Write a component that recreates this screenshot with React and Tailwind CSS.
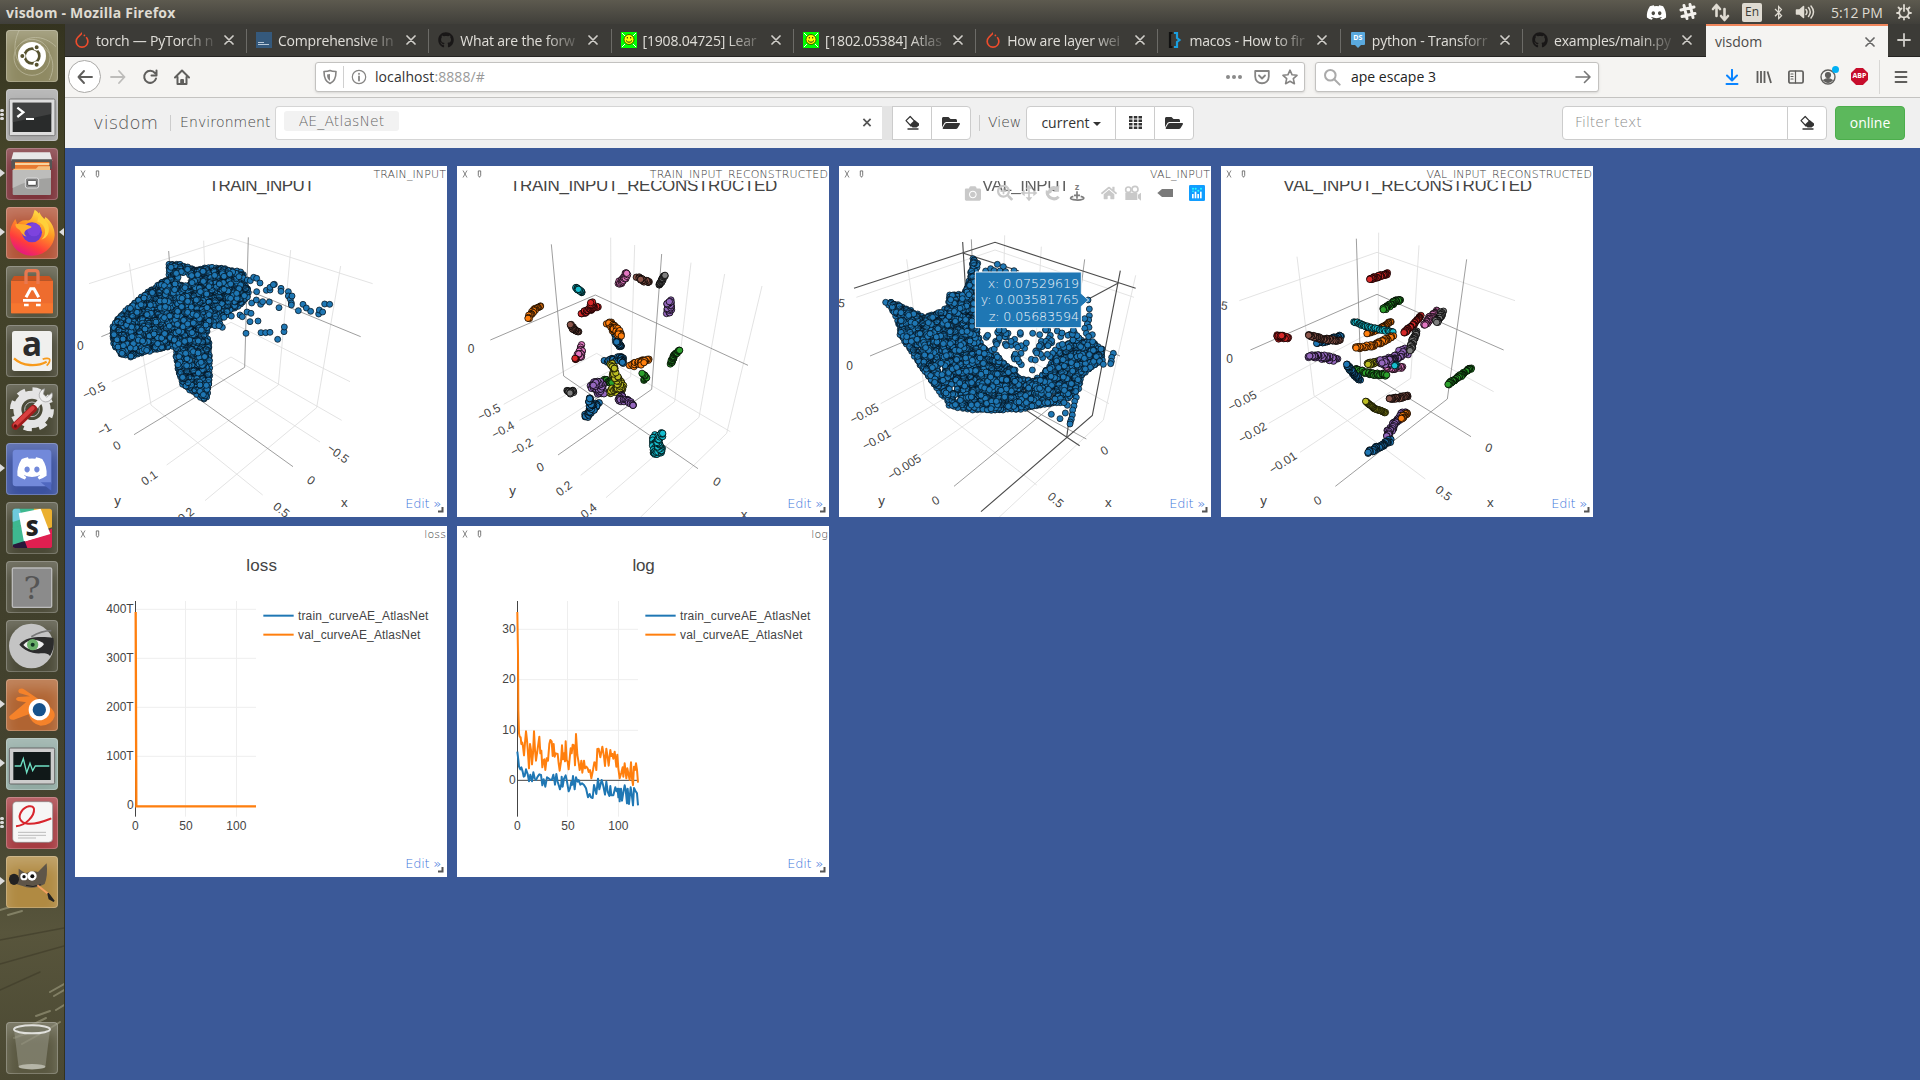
import React from "react";
import { FaDiscord, FaGithub, FaFolderOpen, FaBluetoothB, FaCamera, FaHome, FaSearchPlus } from "react-icons/fa";
import { SiPytorch } from "react-icons/si";

const UI = "font-['Open_Sans','Noto_Sans',sans-serif]";
const DJ = "font-['DejaVu_Sans',sans-serif]";
const SANS = "Liberation Sans, Arial, sans-serif";

const C = {
  blue: "#1f77b4", orange: "#ff7f0e", green: "#2ca02c", red: "#d62728", purple: "#9467bd",
  brown: "#8c564b", pink: "#e377c2", gray: "#7f7f7f", olive: "#bcbd22", cyan: "#17becf",
};

/* ---------- deterministic sampling ---------- */
function rng(seed) {
  let s = seed;
  return () => {
    s = (s * 1664525 + 1013904223) % 4294967296;
    return s / 4294967296;
  };
}
function inside(x, y, p) {
  let r = false;
  for (let i = 0, j = p.length - 1; i < p.length; j = i++) {
    const [a, b] = p[i], [c, d] = p[j];
    if (b > y !== d > y && x < ((c - a) * (y - b)) / (d - b) + a) r = !r;
  }
  return r;
}
function fill(poly, n, seed, holes = []) {
  const r = rng(seed);
  const xs = poly.map((p) => p[0]), ys = poly.map((p) => p[1]);
  const x0 = Math.min(...xs), x1 = Math.max(...xs), y0 = Math.min(...ys), y1 = Math.max(...ys);
  const out = [];
  while (out.length < n) {
    const x = x0 + r() * (x1 - x0), y = y0 + r() * (y1 - y0);
    if (inside(x, y, poly) && !holes.some(([a, b, q]) => Math.hypot(a - x, b - y) < q)) out.push([Math.round(x), Math.round(y)]);
  }
  return out;
}
function edge(poly, step, seed) {
  const r = rng(seed);
  const out = [];
  poly.forEach(([a, b], i) => {
    const [c, d] = poly[(i + 1) % poly.length];
    const n = Math.max(1, Math.round(Math.hypot(c - a, d - b) / step));
    for (let k = 0; k < n; k++) out.push([Math.round(a + ((c - a) * k) / n + r() * 4 - 2), Math.round(b + ((d - b) * k) / n + r() * 4 - 2)]);
  });
  return out;
}

function Dots({ pts, color = C.blue, sw = 2.2 }) {
  return (
    <g fill={color} stroke="#04101a" strokeWidth={sw}>
      {pts.map(([x, y], i) => <circle key={i} cx={x} cy={y} r="9" />)}
    </g>
  );
}
/* Outlines showing between the markers of a crowded cloud */
function Rings({ pts }) {
  return (
    <g fill="none" stroke="#04141f" strokeWidth="2" opacity=".75">
      {pts.map(([x, y], i) => <path key={i} d={`M${x - 8} ${y - 3}A9 9 0 0 1 ${x + 7} ${y - 5}`} />)}
    </g>
  );
}

function Strand({ c, pts, n = 14, j = 2, seed = 7 }) {
  const r = rng(seed + pts[0][0] * 31 + pts[0][1]);
  const seg = pts.length - 1;
  const m = Math.round(n * 1.7);
  const out = [];
  for (let i = 0; i < m; i++) {
    const t = (i / (m - 1)) * seg;
    const k = Math.min(seg - 1, Math.floor(t)), f = t - k;
    out.push([
      pts[k][0] + (pts[k + 1][0] - pts[k][0]) * f + (i === m - 1 ? 0 : (r() - 0.5) * 2.2 * j),
      pts[k][1] + (pts[k + 1][1] - pts[k][1]) * f + (i === m - 1 ? 0 : (r() - 0.5) * 2.2 * j),
    ]);
  }
  return (
    <g fill={C[c]} stroke="#000" strokeWidth="2.3">
      {out.map(([x, y], i) => <circle key={i} cx={x} cy={y} r="9.6" />)}
    </g>
  );
}

function Lines({ d, color = "#dedede", w = 2.6 }) {
  return <g stroke={color} strokeWidth={w} fill="none">{d.map((p, i) => <polyline key={i} points={p} />)}</g>;
}
function Tick({ x, y, r = 0, children, size = 36, fill = "#444" }) {
  return (
    <text x={x} y={y} transform={`rotate(${r} ${x} ${y})`} fontSize={size} fill={fill} textAnchor="middle" dominantBaseline="central" fontFamily={SANS}>
      {children}
    </text>
  );
}
function Title({ y = 77, len, op = 1, children }) {
  return <text x="575" y={y + 17} fontSize="51" fill="#444" opacity={op} textAnchor="middle" textLength={len} fontFamily={SANS}>{children}</text>;
}

/* ---------- charts (drawn in thirds of a pixel) ---------- */
const P1 = [[298, 312], [330, 314], [380, 330], [425, 322], [465, 327], [510, 337], [520, 345], [522, 372], [535, 388], [533, 410], [513, 433], [485, 448], [450, 478], [412, 500], [408, 525], [415, 550], [418, 600], [418, 660], [410, 712], [403, 718], [370, 695], [340, 674], [328, 640], [318, 590], [318, 556], [260, 568], [215, 578], [180, 590], [155, 582], [135, 560], [128, 530], [130, 500], [150, 470], [185, 437], [225, 404], [275, 368], [298, 355]];
const P1X = [[532, 360], [541, 362], [551, 352], [560, 355], [570, 369], [560, 395], [589, 391], [600, 390], [600, 382], [613, 373], [610, 374], [633, 385], [633, 394], [655, 395], [655, 408], [661, 418], [666, 408], [664, 429], [664, 435], [685, 452], [699, 433], [709, 444], [722, 454], [746, 462], [748, 450], [758, 456], [764, 432], [779, 433], [627, 443], [545, 429], [559, 420], [572, 433], [578, 425], [598, 426], [510, 465], [517, 470], [531, 456], [543, 460], [540, 485], [564, 483], [528, 520], [573, 518], [587, 518], [600, 517], [642, 515], [643, 501], [623, 538], [484, 468], [457, 502], [450, 492], [462, 472], [435, 497], [447, 497]];
const H1 = [[344, 358, 19], [372, 596, 6]];

function TrainInput() {
  return (
    <>
      <Title len="318">TRAIN_INPUT</Title>
      <Lines d={["57,371 483,235 908,371", "178,310 200,470 243,735", "401,242 410,480", "662,270 625,675", "812,318 740,743", "125,665 483,487 840,665", "150,780 483,591 815,781", "243,735 578,1005", "290,915 625,675", "405,1022 740,743", "430,640 750,846"]} />
      <Lines color="#8f8f8f" d={["94,530 483,370 872,530", "296,273 310,470 335,680 669,920", "535,232 524,622 192,824"]} />
      <Dots pts={edge(P1, 12, 5)} />
      <Dots pts={fill(P1, 1900, 11, H1)} />
      <Rings pts={fill(P1, 1100, 41, H1)} />
      <Dots pts={fill(P1, 210, 91, H1)} />
      <Dots pts={P1X} />
      <Tick x="31" y="558">0</Tick><Tick x="72" y="692" r={-27}>−0.5</Tick><Tick x="103" y="808" r={-30}>−1</Tick>
      <Tick x="141" y="857" r={-30}>0</Tick><Tick x="238" y="954" r={-35}>0.1</Tick><Tick x="348" y="1065" r={-38}>0.2</Tick>
      <Tick x="804" y="881" r={37}>−0.5</Tick><Tick x="723" y="961" r={35}>0</Tick><Tick x="634" y="1050" r={38}>0.5</Tick>
      <Tick x="143" y="1022" size={40}>y</Tick><Tick x="823" y="1026" size={40}>x</Tick>
    </>
  );
}

function TrainRecon() {
  return (
    <>
      <Title len="802">TRAIN_INPUT_RECONSTRUCTED</Title>
      <Lines d={["476,233 478,610", "548,255 536,650", "717,308 668,725", "818,342 741,772", "930,378 824,820", "155,733 434,580 835,815", "202,781 478,630", "256,831 536,650", "386,946 668,725", "462,1013 741,772", "565,1072 824,820"]} />
      <Lines color="#8f8f8f" d={["115,540 430,405 888,616", "298,253 335,648 738,926", "629,282 599,688 318,885"]} />
      <Strand c="cyan" pts={[[391, 398], [385, 393], [372, 382], [379, 388]]} n={9} />
      <Strand c="pink" pts={[[500, 371], [515, 360], [524, 340]]} n={15} j={5} />
      <Strand c="brown" pts={[[556, 353], [590, 368], [566, 358]]} n={16} j={3} />
      <Strand c="gray" pts={[[621, 376], [630, 360], [639, 346]]} n={14} />
      <Strand c="purple" pts={[[650, 458], [652, 440], [652, 425]]} n={16} j={7} />
      <Strand c="orange" pts={[[265, 441], [245, 450], [228, 475]]} n={13} j={3} />
      <Strand c="red" pts={[[437, 440], [388, 459], [425, 442], [416, 428]]} n={26} j={4} />
      <Strand c="brown" pts={[[378, 515], [365, 507], [355, 494]]} n={11} />
      <Strand c="pink" pts={[[390, 556], [385, 590], [380, 582]]} n={13} j={5} />
      <Strand c="red" pts={[[372, 598], [369, 595]]} n={3} j={1} />
      <Strand c="blue" pts={[[490, 520], [505, 562], [494, 546]]} n={18} j={4} />
      <Strand c="orange" pts={[[470, 488], [490, 510], [480, 500], [508, 528]]} n={28} j={7} />
      <Strand c="blue" pts={[[462, 607], [510, 590], [511, 607]]} n={20} j={5} />
      <Strand c="orange" pts={[[590, 594], [537, 615], [576, 608]]} n={22} j={6} />
      <Strand c="green" pts={[[656, 610], [665, 588], [683, 571]]} n={18} j={3} />
      <Strand c="green" pts={[[576, 661], [582, 652], [570, 640]]} n={5} j={2} />
      <Strand c="green" pts={[[460, 660], [480, 668]]} n={8} j={3} />
      <Strand c="olive" pts={[[478, 612], [488, 650], [515, 685], [470, 698], [500, 680], [487, 625]]} n={50} j={6} />
      <Strand c="purple" pts={[[418, 675], [450, 700], [445, 668], [424, 676]]} n={38} j={8} />
      <Strand c="purple" pts={[[510, 705], [500, 722], [528, 720], [543, 736]]} n={18} j={4} />
      <Strand c="gray" pts={[[344, 694], [364, 694], [354, 699]]} n={10} j={3} />
      <Strand c="blue" pts={[[438, 728], [400, 768], [420, 745], [413, 716]]} n={34} j={6} />
      <Strand c="cyan" pts={[[605, 828], [604, 880], [630, 870], [615, 845], [632, 820]]} n={40} j={5} />
      <Tick x="57" y="566">0</Tick><Tick x="111" y="757" r={-27}>−0.5</Tick><Tick x="153" y="810" r={-29}>−0.4</Tick>
      <Tick x="209" y="861" r={-30}>−0.2</Tick><Tick x="265" y="922" r={-25}>0</Tick><Tick x="336" y="986" r={-37}>0.2</Tick>
      <Tick x="410" y="1053" r={-39}>0.4</Tick><Tick x="795" y="965" r={30}>0</Tick>
      <Tick x="182" y="992" size={40}>y</Tick><Tick x="876" y="1062" size={40}>x</Tick>
    </>
  );
}

const P3 = [[418, 298], [432, 308], [424, 335], [424, 400], [426, 480], [430, 520], [445, 560], [470, 585], [500, 602], [530, 625], [555, 655], [598, 662], [625, 645], [645, 620], [665, 590], [700, 550], [730, 540], [770, 545], [803, 565], [803, 600], [765, 628], [742, 645], [736, 685], [712, 705], [680, 728], [620, 734], [560, 748], [470, 750], [400, 748], [345, 735], [340, 712], [322, 702], [300, 672], [275, 638], [250, 600], [225, 562], [200, 522], [193, 480], [178, 452], [157, 427], [170, 427], [205, 440], [240, 460], [272, 472], [318, 456], [345, 440], [348, 403], [388, 404], [400, 385], [410, 350]];
const P3S = [[442, 508], [720, 508], [765, 540], [700, 550], [665, 590], [600, 600], [540, 640], [500, 602], [455, 570]];
const H3 = [[322, 625, 12], [357, 684, 12], [370, 714, 11]];

function ValInput() {
  return (
    <>
      <Title len="262" op={0.85}>VAL_INPUT</Title>
      <Lines d={["67,412 483,270 900,412", "218,298 275,716 608,975", "512,226 505,560", "622,260 600,650", "905,346 808,780 495,1072", "140,731 483,545 825,731", "175,808 475,630", "262,886 600,650"]} />
      <Lines color="#8f8f8f" d={["108,588 483,430 858,588", "412,238 430,660 757,837", "752,298 700,700 360,979"]} />
      <Lines color="#4d4d4d" w={3.4} d={["60,385 483,247 905,385", "386,246 410,640 737,857", "859,332 775,766 441,1055", "386,279 555,333", "740,430 853,369", "698,832 710,745"]} />
      <Dots pts={edge(P3, 13, 8)} />
      <Dots pts={fill(P3, 2000, 23, H3)} />
      <Rings pts={fill(P3, 1100, 47, H3)} />
      <Dots pts={fill(P3, 260, 77, [[322, 625, 14], [362, 700, 18]])} />
      <Dots pts={fill(P3S, 85, 31, [[590, 630, 30], [500, 565, 16], [600, 548, 14], [470, 540, 14]])} />
      <Dots pts={[[455, 333], [470, 326], [490, 313], [508, 320], [540, 332], [480, 332], [498, 333], [515, 335], [766, 447], [766, 467], [764, 480], [752, 476], [760, 492], [765, 502], [752, 505], [757, 520], [775, 524], [764, 530], [776, 545], [838, 580], [833, 592], [832, 604], [830, 611], [808, 613], [652, 763], [678, 776], [694, 759], [700, 736], [690, 728], [727, 712], [722, 724], [720, 738], [716, 750], [715, 765], [712, 778], [709, 786], [708, 792], [595, 630], [604, 600], [550, 597], [640, 583], [762, 420]]} />
      <g>
        <path d="M424 336 H742 V401 L764 420 L742 439 V503 H424 Z" fill={C.blue} stroke="#f4f8fb" strokeWidth="3" />
        <g fill="#f2f6fa" fontFamily="DejaVu Sans, sans-serif" fontWeight="200" fontSize="38" textAnchor="end">
          <text x="735" y="384" textLength="274">x: 0.07529619</text>
          <text x="735" y="432" textLength="295">y: 0.003581765</text>
          <text x="735" y="483" textLength="271">z: 0.05683594</text>
        </g>
      </g>
      <g color="#c9c9c9" fill="#c9c9c9">
        <FaCamera x="392" y="76" size="49" />
        <FaSearchPlus x="489" y="74" size="48" />
        <path d="M585 80V118M566 99H604" stroke="#c9c9c9" strokeWidth="5" />
        <path d="M585 74l10 12h-20zM585 124l10-12h-20zM560 99l12-10v20zM610 99l-12-10v20z" />
        <path d="M640 92A20 20 0 0 0 674 110" fill="none" stroke="#c9c9c9" strokeWidth="9" />
        <path d="M646 84A20 20 0 0 1 668 80l8-5-1 20-18 1 6-7A12 12 0 0 0 652 98l-16 8z" />
        <FaHome x="801" y="75" size="48" />
        <path d="M874 98h36v22h-36zM912 104l9-6v24l-9-7z" />
        <g fill="none" stroke="#c9c9c9" strokeWidth="5"><circle cx="883" cy="89" r="8" /><circle cx="903" cy="88" r="9" /></g>
      </g>
      <g fill="none" stroke="#7d7d7d" strokeWidth="5"><path d="M729 94v22M720 106h18" /><path d="M718 109c-10 3-12 8 0 10 10 2 20 2 28-1 6-3 4-7-6-9" /></g>
      <text x="729" y="91" fontSize="28" fontWeight="700" fill="#7d7d7d" textAnchor="middle" fontFamily={SANS}>z</text>
      <path d="M970 99l14-12h33v24h-33z" fill="#7a7a7a" />
      <rect x="1065" y="75" width="48" height="48" rx="4" fill="#119dff" />
      <g fill="#fff"><rect x="1074" y="102" width="5" height="13" /><rect x="1082" y="95" width="5" height="20" /><rect x="1090" y="102" width="5" height="13" /><rect x="1098" y="95" width="5" height="20" /></g>
      <g fill="#25fefd"><circle cx="1077" cy="86" r="3" /><circle cx="1085" cy="86" r="3" /><circle cx="1093" cy="92" r="3" /><circle cx="1101" cy="86" r="3" /><circle cx="1077" cy="94" r="2.5" /></g>
      <Tick x="23" y="430" r={8}>5</Tick><Tick x="47" y="617">0</Tick><Tick x="91" y="761" r={-28}>−0.05</Tick><Tick x="128" y="839" r={-29}>−0.01</Tick>
      <Tick x="211" y="921" r={-33}>−0.005</Tick><Tick x="305" y="1022" r={-30}>0</Tick><Tick x="811" y="872" r={-30}>0</Tick><Tick x="665" y="1020" r={40}>0.5</Tick>
      <Tick x="143" y="1022" size={40}>y</Tick><Tick x="823" y="1026" size={40}>x</Tick>
    </>
  );
}

function ValRecon() {
  return (
    <>
      <Title len="746">VAL_INPUT_RECONSTRUCTED</Title>
      <Lines d={["70,422 483,277 897,422", "243,290 294,707 628,957", "488,218 486,560", "609,256 584,655", "132,695 483,507 833,695", "158,790 486,600", "252,877 584,655"]} />
      <Lines color="#8f8f8f" d={["103,570 483,403 863,570", "421,236 434,625 765,830", "752,298 694,717 358,979"]} />
      <Strand c="red" pts={[[514, 341], [488, 349], [461, 358]]} n={22} j={3} />
      <Strand c="green" pts={[[549, 419], [530, 430], [502, 449]]} n={24} j={4} />
      <Strand c="red" pts={[[182, 533], [215, 532], [184, 528], [197, 527]]} n={20} j={4} />
      <Strand c="blue" pts={[[372, 527], [340, 540], [302, 550]]} n={26} j={4} />
      <Strand c="brown" pts={[[370, 541], [320, 537], [278, 526]]} n={26} j={3} />
      <Strand c="purple" pts={[[361, 599], [320, 592], [281, 588]]} n={36} j={6} />
      <Strand c="orange" pts={[[524, 486], [490, 507], [453, 521]]} n={20} j={2} />
      <Strand c="cyan" pts={[[414, 484], [460, 502], [531, 516]]} n={20} j={2} />
      <Strand c="orange" pts={[[530, 530], [480, 555], [420, 564]]} n={28} j={4} />
      <Strand c="red" pts={[[613, 469], [590, 495], [564, 518]]} n={24} j={3} />
      <Strand c="pink" pts={[[663, 453], [640, 475], [627, 495]]} n={26} j={4} />
      <Strand c="gray" pts={[[679, 457], [668, 475], [662, 487]]} n={22} j={4} />
      <Strand c="green" pts={[[420, 630], [460, 640], [512, 645]]} n={28} j={4} />
      <Strand c="olive" pts={[[490, 605], [470, 608], [456, 613]]} n={18} j={4} />
      <Strand c="pink" pts={[[560, 620], [535, 625], [511, 621]]} n={20} j={4} />
      <Strand c="purple" pts={[[578, 570], [540, 590], [520, 605], [498, 609]]} n={48} j={9} />
      <Strand c="cyan" pts={[[540, 615], [536, 617]]} n={2} j={1} />
      <Strand c="gray" pts={[[601, 514], [592, 540], [582, 572]]} n={24} j={4} />
      <Strand c="blue" pts={[[432, 660], [412, 640], [392, 613]]} n={22} j={3} />
      <Strand c="green" pts={[[765, 624], [730, 650], [696, 673]]} n={28} j={3} />
      <Strand c="brown" pts={[[576, 708], [550, 713], [520, 716]]} n={20} j={3} />
      <Strand c="olive" pts={[[508, 758], [475, 745], [449, 724]]} n={22} j={1} />
      <Strand c="purple" pts={[[568, 758], [535, 790], [512, 828]]} n={38} j={6} />
      <Strand c="orange" pts={[[574, 758], [556, 775]]} n={10} j={3} />
      <Strand c="blue" pts={[[522, 842], [490, 860], [456, 877]]} n={28} j={4} />
      <Tick x="25" y="437" r={8}>5</Tick><Tick x="41" y="598">0</Tick><Tick x="79" y="723" r={-28}>−0.05</Tick><Tick x="110" y="818" r={-30}>−0.02</Tick>
      <Tick x="201" y="908" r={-33}>−0.01</Tick><Tick x="305" y="1022" r={-30}>0</Tick><Tick x="818" y="864" r={20}>0</Tick><Tick x="683" y="1000" r={38}>0.5</Tick>
      <Tick x="143" y="1022" size={40}>y</Tick><Tick x="823" y="1026" size={40}>x</Tick>
    </>
  );
}

function Axes({ ys, title, len, zero }) {
  return (
    <>
      <Title y={136} len={len}>{title}</Title>
      <g stroke="#eee" strokeWidth="3">
        {ys.map(([y]) => <path key={y} d={`M196 ${y}H558`} />)}
        <path d="M346.500 243V890M499.500 243V890" />
      </g>
      <path d="M196.500 243V890" stroke="#444" strokeWidth="3" />
      {zero && <path d={`M196 ${zero}H558`} stroke="#444" strokeWidth="3" />}
      <g fontSize="36" fill="#444" fontFamily={SANS}>
        {ys.map(([y, l]) => <text key={l} x="191" y={y + 11} textAnchor="end">{l}</text>)}
        {zero && <text x="191" y={zero + 11} textAnchor="end">0</text>}
        <text x="196" y="930" textAnchor="middle">0</text><text x="348" y="930" textAnchor="middle">50</text><text x="499" y="930" textAnchor="middle">100</text>
        <text x="684" y="300" textLength="391">train_curveAE_AtlasNet</text><text x="684" y="357" textLength="367">val_curveAE_AtlasNet</text>
      </g>
      <path d="M580 287H671" stroke={C.blue} strokeWidth="6" /><path d="M580 344H671" stroke={C.orange} strokeWidth="6" />
    </>
  );
}
function Loss() {
  return (
    <>
      <Axes title="loss" len="92" ys={[[268, "400T"], [415, "300T"], [562, "200T"], [709, "100T"], [857, "0"]]} />
      <path d="M197 276L199 859H558" fill="none" stroke={C.orange} strokeWidth="7" />
    </>
  );
}
const VAL = "196,276 198,400 199,570 201,640 203,650 206,652 208,672 211,668 213,680 216,706 219,668 222,634 225,660 228,700 231,745 234,672 237,690 240,733 243,700 246,634 249,690 252,722 255,700 259,672 262,650 265,700 268,692 271,742 274,722 277,718 280,750 284,715 288,722 292,672 295,660 299,664 302,708 305,672 308,710 311,700 317,702 320,730 323,752 327,725 330,676 333,718 336,700 339,724 341,664 344,720 347,725 350,748 353,715 356,685 359,700 362,674 366,676 369,736 372,642 376,705 380,728 383,750 386,738 388,722 391,758 396,722 399,745 403,740 407,745 410,756 414,750 418,775 423,750 427,727 430,728 433,750 436,687 440,686 445,712 451,680 456,710 459,738 463,686 467,712 470,737 475,690 478,708 481,702 484,716 488,695 493,740 496,704 499,745 503,775 508,758 512,742 514,770 518,730 523,775 526,745 530,765 533,780 537,727 540,775 543,795 546,740 549,750 552,730 555,750 558,788";
const TRAIN = "196,695 199,720 201,740 205,748 208,742 212,755 215,770 218,768 222,748 227,762 231,784 235,764 240,784 244,757 248,775 252,780 257,770 262,763 267,765 271,796 275,778 280,800 285,772 290,775 295,780 300,778 304,764 307,780 309,794 313,762 317,785 320,795 324,808 328,792 329,770 332,800 336,776 341,766 345,785 350,814 354,805 358,785 360,795 363,768 368,808 372,772 377,785 380,780 385,794 390,790 396,795 402,805 408,832 413,822 417,832 422,834 426,795 433,822 438,776 442,808 449,780 453,794 459,824 463,785 467,815 472,828 475,798 478,826 484,826 490,802 494,814 497,806 499,832 501,806 503,844 507,806 510,842 515,812 518,796 521,810 525,850 527,806 531,852 536,802 540,830 543,856 546,804 550,812 555,820 558,856";
function Log() {
  return (
    <>
      <Axes title="log" len="67" zero={781} ys={[[328, "30"], [479, "20"], [631, "10"]]} />
      <g fill="none" strokeWidth="6" strokeLinejoin="round"><polyline points={TRAIN} stroke={C.blue} /><polyline points={VAL} stroke={C.orange} /></g>
    </>
  );
}

function Pane({ name, Chart }) {
  return (
    <section className="relative h-[351px] w-[372px] overflow-hidden bg-white">
      <svg className="absolute inset-0 h-full w-full" viewBox="15 18 1116 1053"><Chart /></svg>
      <header className={`relative flex h-[15px] items-center justify-between bg-white pl-[5px] pr-[1px] text-[11px] leading-[15px] font-extralight text-[#3c3c3c] ${DJ}`}>
        <span className="flex items-center gap-[9px]">
          <svg width="6" height="8" viewBox="0 0 6 8" fill="none" stroke="#666" strokeWidth=".8"><path d="M1 .5L5 7.500M5 .5L1 7.500" /></svg>
          <svg width="5" height="8" viewBox="0 0 5 8" fill="none" stroke="#555" strokeWidth=".8"><path d="M1.300 .9h2.400v4.600L2.500 7.300 1.300 5.500z" /></svg>
        </span>
        <span className="translate-y-px tracking-[0.12px]">{name}</span>
      </header>
      <div className={`absolute right-[6px] bottom-[4px] text-[13px] leading-[18px] font-extralight tracking-[-0.25px] text-[#3f78dc] ${DJ}`}>Edit »</div>
      <svg className="absolute right-[3px] bottom-[4px]" width="6" height="6"><path d="M4.500 0V4.500H0" stroke="#555" strokeWidth="2" fill="none" /></svg>
    </section>
  );
}

/* ---------- launcher ---------- */
const Tile = ({ bg, mark, focus, children }) => (
  <div className="relative flex h-[52px] w-[65px] shrink-0 items-center pl-[6px]">
    {mark === 1 && <i className="absolute top-[21px] left-0 h-0 w-0 border-y-[4px] border-l-[5px] border-y-transparent border-l-[#dcdcdc]" />}
    {mark === 3 && <i className="absolute top-[20px] left-0 flex h-[11px] w-[4px] flex-col justify-between"><b className="h-[3px] rounded bg-[#dcdcdc]" /><b className="h-[3px] rounded bg-[#dcdcdc]" /><b className="h-[3px] rounded bg-[#dcdcdc]" /></i>}
    <div className={`relative h-[52px] w-[52px] overflow-hidden rounded-[4px] shadow-[inset_0_0_0_1px_rgba(255,255,255,0.22),inset_0_10px_14px_rgba(255,255,255,0.22)] ${bg}`}>
      <svg width="52" height="52" viewBox="0 0 156 156">{children}</svg>
    </div>
    {focus && <i className="absolute top-[21px] right-[1px] h-0 w-0 border-y-[4px] border-r-[5px] border-y-transparent border-r-[#dcdcdc]" />}
  </div>
);

function Launcher() {
  return (
    <aside className="relative flex w-[65px] shrink-0 flex-col gap-[7px] border-r border-[#33321f] bg-[linear-gradient(180deg,#34331f_0%,#454429_12%,#403f2b_50%,#454430_75%,#58553c_86%,#4a4832_100%)] pt-[6px] pb-[6px]">
      <svg className="absolute bottom-0 left-0" width="64" height="200" viewBox="0 0 64 200" fill="none" strokeLinecap="round">
        <g stroke="#a8a588" strokeWidth="2" opacity=".55"><path d="M0 30L20 24M8 35L22 31M50 112L64 104M54 116L64 110M36 136L50 131M30 146L46 138M14 158L30 152M22 164L40 154M44 152L60 142M56 130L64 125" /></g>
        <g stroke="#3d3b28" strokeWidth="1.500" opacity=".6"><path d="M0 60L64 48M0 84L64 66M0 110L40 92" /></g>
      </svg>
      <Tile bg="bg-[#8f8a63]">
        <g fill="none" stroke="#cbc8b0" strokeWidth="3" opacity=".6"><circle cx="78" cy="82" r="54" /><path d="M40 0C20 40 20 90 60 120M150 50C110 10 60 20 45 40M130 150C150 110 140 70 110 50" /></g>
        <circle cx="78" cy="78" r="42" fill="#fff" />
        <circle cx="78" cy="78" r="22" fill="none" stroke="#56522f" strokeWidth="8" />
        <g stroke="#fff" strokeWidth="4" fill="#56522f"><circle cx="49" cy="78" r="8" /><circle cx="92" cy="52" r="8" /><circle cx="92" cy="104" r="8" /></g>
      </Tile>
      <Tile bg="bg-[#a8a8a8]" mark={3}>
        <rect x="10" y="30" width="137" height="110" rx="4" fill="#ddd" stroke="#777" strokeWidth="3" /><rect x="20" y="41" width="116" height="88" fill="#292b2b" /><path d="M20 41H136V75L20 100Z" fill="#555" opacity=".5" />
        <path d="M34 56l18 14-18 14" fill="none" stroke="#fff" strokeWidth="7" /><path d="M60 90h24" stroke="#fff" strokeWidth="6" />
      </Tile>
      <Tile bg="bg-[#7d343b]" mark={1}>
        <path d="M22 13H132L139 38H15Z" fill="#e8e8e8" /><path d="M16 34H138V62H16Z" fill="#555" /><path d="M27 42H130V64H27Z" fill="#e87a30" /><path d="M27 48H130" stroke="#fff0c0" strokeWidth="4" /><path d="M22 62H90L97 55H132V66H22Z" fill="#f4c080" />
        <path d="M20 66H135V138Q135 141 132 141H23Q20 141 20 138Z" fill="#a2a2a0" /><path d="M20 66H135V90Q80 90 20 120Z" fill="#bdbdbb" />
        <rect x="58" y="90" width="40" height="30" rx="6" fill="#888" stroke="#ddd" strokeWidth="3" /><rect x="65" y="97" width="26" height="15" rx="3" fill="#fff" stroke="#333" strokeWidth="2.500" />
      </Tile>
      <Tile bg="bg-[#b35539]" mark={1} focus>
        <defs><linearGradient id="ff" x1=".8" y1="0" x2=".3" y2="1"><stop offset="0" stopColor="#fff34f" /><stop offset=".4" stopColor="#ff9a24" /><stop offset=".75" stopColor="#ff3c3c" /><stop offset="1" stopColor="#e31587" /></linearGradient></defs>
        <path d="M78 146C35 146 10 112 12 76C14 58 20 48 28 36L34 52C40 44 50 38 62 40C76 42 80 28 86 8C96 14 104 24 108 36C114 40 116 36 118 30C138 44 146 66 146 84C144 118 116 146 78 146Z" fill="url(#ff)" />
        <circle cx="78" cy="76" r="30" fill="#6a3bd0" /><circle cx="84" cy="68" r="20" fill="#8a4ae8" opacity=".6" />
        <path d="M28 52C44 50 62 52 74 58C80 60 74 64 62 68C52 74 54 84 62 88C50 88 46 74 40 68C34 66 28 60 28 52Z" fill="#ffb02e" />
        <path d="M94 44C118 50 126 80 106 98C124 94 134 74 126 52C118 36 104 28 100 14Z" fill="#ffd03a" />
      </Tile>
      <Tile bg="bg-[#55543f]">
        <path d="M15 44H141V138Q141 142 137 142H19Q15 142 15 138Z" fill="#ee6c2e" /><path d="M15 44L24 30H130L141 44Z" fill="#c9521f" /><path d="M15 112H141V142H15Z" fill="#f6762f" />
        <path d="M60 54V22Q60 14 68 14H88Q96 14 96 22V54" fill="none" stroke="#e87850" strokeWidth="10" />
        <path d="M60 94L74 68H84L98 94" fill="none" stroke="#fff" strokeWidth="9" /><path d="M51 103H105M54 117H68M90 117H104" stroke="#fff" strokeWidth="8" />
      </Tile>
      <Tile bg="bg-[#4b4a38]">
        <rect x="18" y="18" width="120" height="120" rx="8" fill="#f0f0ee" /><text x="78" y="94" textAnchor="middle" fontSize="100" fontWeight="700" fontFamily="Open Sans, sans-serif" fill="#2b2b2b">a</text>
        <path d="M24 100C50 124 92 126 122 110" fill="none" stroke="#f79a1b" strokeWidth="7" /><path d="M110 103C120 98 130 100 131 103C132 108 128 116 122 122" fill="none" stroke="#f79a1b" strokeWidth="5" />
      </Tile>
      <Tile bg="bg-[#4a4936]">
        <circle cx="78" cy="76" r="44" fill="none" stroke="#e4e4e4" strokeWidth="24" /><circle cx="78" cy="76" r="58" fill="none" stroke="#e4e4e4" strokeWidth="16" strokeDasharray="24 21.500" /><circle cx="78" cy="76" r="22" fill="none" stroke="#bbb" strokeWidth="3" />
        <path d="M84 72L110 44" stroke="#eee" strokeWidth="16" /><path d="M138 26A20 20 0 1 1 116 14L112 30L122 40Z" fill="#eee" stroke="#999" strokeWidth="2" />
        <path d="M28 126L82 74" stroke="#a01c1c" strokeWidth="22" strokeLinecap="round" /><path d="M27 123L80 72" stroke="#d84040" strokeWidth="12" strokeLinecap="round" /><circle cx="28" cy="126" r="5" fill="#641010" />
      </Tile>
      <Tile bg="bg-[#3c529f]" mark={1}>
        <rect x="20" y="20" width="116" height="110" rx="10" fill="#7289da" /><path d="M104 118H136V143Z" fill="#5068c0" /><g color="#fff"><FaDiscord x="30" y="28" size="96" /></g>
      </Tile>
      <Tile bg="bg-[#4a4936]">
        <clipPath id="sl"><rect x="20" y="20" width="118" height="118" rx="8" /></clipPath>
        <g clipPath="url(#sl)"><path d="M0 0H80L95 50L20 80L0 90Z" fill="#3eb890" /><path d="M80 0H156V70L95 90Z" fill="#ebb030" /><path d="M156 70V156H90L80 110Z" fill="#df1f50" /><path d="M0 20L40 18L50 50L20 60Z" fill="#6ecadc" /><path d="M0 84L44 70L60 120L0 140Z" fill="#3eb890" /><path d="M38 34L104 20L134 98L54 120Z" fill="#fff" /><path d="M20 130L140 94V138H20Z" fill="#df1f50" /><path d="M20 128L56 117L64 138H20Z" fill="#29173a" /></g>
        <text x="78" y="101" fontSize="66" fontWeight="800" textAnchor="middle" fontFamily="Open Sans, sans-serif" fill="#222">S</text>
      </Tile>
      <Tile bg="bg-[#4f4e3c]">
        <rect x="19" y="21" width="118" height="118" rx="4" fill="#8b8b8b" stroke="#bbb" strokeWidth="4" /><text x="78" y="114" fontSize="96" textAnchor="middle" fontFamily="DejaVu Serif, serif" fill="#555">?</text>
      </Tile>
      <Tile bg="bg-[#4c4b39]">
        <circle cx="76" cy="78" r="67" fill="#c4c4c4" /><path d="M40 74C60 46 116 50 142 54C146 74 142 92 132 108C122 94 100 104 80 98C64 94 50 86 40 74Z" fill="#2c2c2c" /><path d="M52 75C66 56 98 56 114 72C104 92 68 95 52 75Z" fill="#eee" /><circle cx="80" cy="74" r="17" fill="#6ab06a" /><circle cx="80" cy="74" r="6" fill="#132" /><path d="M76 50C100 36 120 32 136 32" stroke="#777" strokeWidth="5" fill="none" />
      </Tile>
      <Tile bg="bg-[#b06432]" mark={1}>
        <path d="M40 30Q48 26 56 32L132 84Q148 98 146 112Q138 140 104 140Q76 136 68 106L24 122Q8 124 10 112L60 70L36 66Q24 60 36 54L72 52L40 42Q34 36 40 30Z" fill="#f5822a" /><circle cx="100" cy="92" r="32" fill="#fff" /><circle cx="100" cy="92" r="20" fill="#16528c" />
      </Tile>
      <Tile bg="bg-[#91aaa3]" mark={1}>
        <rect x="10" y="30" width="136" height="108" rx="4" fill="#ccc" stroke="#666" strokeWidth="3" /><rect x="22" y="42" width="112" height="84" fill="#101818" /><path d="M26 84H44L52 62L62 104L72 76L80 98L88 84H130" fill="none" stroke="#6fe0c4" strokeWidth="4" />
      </Tile>
      <Tile bg="bg-[#a63c42]" mark={3}>
        <rect x="20" y="14" width="120" height="122" rx="12" fill="#f6f6f6" stroke="#888" strokeWidth="2" /><path d="M30 88C60 86 86 56 84 36C82 22 58 26 46 44C34 62 44 78 66 80C94 82 116 72 136 64" fill="none" stroke="#d8262e" strokeWidth="6" /><path d="M36 106H120M36 115H120M36 123H90" stroke="#bbb" strokeWidth="3" />
      </Tile>
      <Tile bg="bg-[#b08a42]" mark={1}>
        <path d="M38 38L58 52Q80 42 96 48L122 22Q126 60 116 84Q92 98 62 94L30 84Q24 70 38 62Z" fill="#5e5548" /><ellipse cx="24" cy="70" rx="15" ry="17" fill="#222" /><circle cx="54" cy="62" r="11" fill="#fff" /><circle cx="78" cy="60" r="14" fill="#fff" /><circle cx="54" cy="62" r="5" fill="#111" /><circle cx="79" cy="61" r="6" fill="#111" />
        <path d="M60 88Q80 96 104 86" stroke="#222" strokeWidth="3" fill="none" /><path d="M94 88L130 116" stroke="#f4a060" strokeWidth="6" /><path d="M126 112L144 136L130 128Z" fill="#222" stroke="#222" strokeWidth="5" />
      </Tile>
      <div className="mt-auto">
        <Tile bg="bg-[#6a684f]/50">
          <path d="M24 22L38 136Q78 150 118 136L132 22" fill="#a5a496" opacity=".45" /><ellipse cx="78" cy="22" rx="54" ry="12" fill="#777765" stroke="#e0e0dc" strokeWidth="6" /><ellipse cx="78" cy="134" rx="40" ry="8" fill="#c4c4b8" opacity=".8" />
        </Tile>
      </div>
    </aside>
  );
}

/* ---------- browser chrome ---------- */
const Ic = ({ w = 16, vb = 16, sw = 1.8, c = "#5f5e5c", children, className = "" }) => (
  <svg className={`shrink-0 ${className}`} width={w} height={w} viewBox={`0 0 ${vb} ${vb}`} fill="none" stroke={c} strokeWidth={sw} strokeLinecap="round" strokeLinejoin="round">{children}</svg>
);
const Cross = ({ c = "#d0cec9" }) => <Ic w={10} vb={10} c={c} sw={1.7}><path d="M1 1l8 8M9 1L1 9" /></Ic>;
const Torch = () => <SiPytorch size={16} color="#ee4c2c" />;
const Hub = () => <FaGithub size={16} color="#191717" />;
const Smile = () => (
  <svg width="16" height="16" viewBox="0 0 16 16"><rect width="16" height="16" fill="#0f0" /><circle cx="8" cy="7.500" r="5" fill="#ff0" stroke="#330" strokeWidth=".8" /><path d="M6.300 5v1.500M9.700 5v1.500M5 8.500q3 3.500 6 0" stroke="#222" fill="none" /><path d="M1 1l3 3M15 1l-3 3M1 15l3-3M15 15l-3-3" stroke="#fff" /></svg>
);
const Blue = () => <span className="flex h-4 w-4 flex-col justify-end gap-px bg-[#35597c] pb-[3px] pl-[2px]"><i className="h-px w-[6px] bg-[#b8c8d8]" /><i className="h-px w-[11px] bg-[#b8c8d8]" /></span>;
const Brace = () => <svg width="16" height="16" viewBox="0 0 16 16" fill="none" strokeWidth="2.200"><path d="M5.500 1H3v14h2.500" stroke="#111" /><path d="M7 1h3v5l2.500 2L10 10v5H7" stroke="#1a9fe0" /></svg>;
const DS = () => (
  <span className="flex h-4 w-4 flex-col items-center">
    <span className="flex h-[13px] w-[14px] items-center justify-center rounded-[1px] bg-[#5aa9de] text-[7px] font-bold text-white">DS</span>
    <i className="h-0 w-0 border-x-[3px] border-t-[3px] border-x-transparent border-t-[#5aa9de]" />
  </span>
);

const TABS = [
  [Torch, "torch — PyTorch n"], [Blue, "Comprehensive In"], [Hub, "What are the forw"], [Smile, "[1908.04725] Lear"], [Smile, "[1802.05384] Atlas"],
  [Torch, "How are layer wei"], [Brace, "macos - How to fir"], [DS, "python - Transforr"], [Hub, "examples/main.py"],
];

function TopBar() {
  return (
    <div className={`flex h-6 shrink-0 items-center justify-between bg-[linear-gradient(#5d5a4f,#403f3a)] pl-[6px] text-[#dfdbd2] ${UI}`}>
      <span className="text-[14px] font-bold tracking-[0.2px]">visdom - Mozilla Firefox</span>
      <div className="flex h-6 items-center">
        <FaDiscord size={21} color="#fff" className="mr-[11px]" />
        <Ic w={20} vb={20} c="#f4f2ee" sw={3} className="mr-[13px]"><path d="M6 3.500l3 13M12 2.500l3 13M3 8l13-3M4 14.500l13-3" /></Ic>
        <Ic w={19} vb={19} c="#dfdbd2" sw={2.6} className="mr-[12px]"><path d="M5.500 13V3M2 6l3.500-4L9 6M13.500 6v10M10 13l3.500 4 3.500-4" /></Ic>
        <span className="mr-[9px] flex h-[19px] w-[20px] items-center justify-center rounded-[2px] bg-[#dfdbd2] text-[12px] text-[#3c3b37]">En</span>
        <FaBluetoothB size={15} className="mr-[9px]" />
        <Ic w={20} vb={20} c="#dfdbd2" sw={1.5} className="mr-[16px]"><path d="M1.500 8h3l4-3.500v11L4.500 12h-3z" fill="#dfdbd2" /><path d="M11 7.500q2 2.500 0 5M13.500 5.500q3.500 4.500 0 9M16 4q5 6 0 12" /></Ic>
        <span className="w-[53px] text-[14px] tracking-[-0.1px] whitespace-nowrap">5:12 PM</span>
        <Ic w={18} vb={18} c="#dfdbd2" sw={1.8} className="ml-[11px] mr-[7px]"><path d="M6.500 5.500a4.800 4.800 0 1 0 5 0M9 2v6M9 14.500v2M2 10h2M14 10h2M3.500 4.500l1.500 1.500M14.500 4.500L13 6M4 15l1.500-1.500M14 15l-1.500-1.500" /></Ic>
      </div>
    </div>
  );
}

function Tabs() {
  return (
    <div className={`flex h-[33px] shrink-0 border-b border-[#252422] bg-[#3c3b37] text-[14px] ${UI}`}>
      {TABS.map(([I, t], i) => (
        <div key={i} className={`relative flex shrink-0 items-center pl-[9px] ${i === 0 ? "w-[182px]" : i === 8 ? "w-[183px]" : "w-[182.300px]"}`}>
          <I />
          <span className="ml-[6px] w-[125px] overflow-hidden tracking-[-0.2px] whitespace-nowrap text-[#e0ded9] [mask-image:linear-gradient(90deg,#000_68%,transparent_99%)]">{t}</span>
          <span className="ml-[3px]"><Cross /></span>
          {i < 8 && <i className="absolute top-[5px] right-0 h-6 w-px bg-[#6c6b67]" />}
        </div>
      ))}
      <div className="flex h-[33px] w-[182px] shrink-0 items-center justify-between border-t-2 border-[#f0865c] bg-[#f5f4f2] pr-[13px] pl-[9px] text-[#4c4b49]"><span>visdom</span><Cross c="#666" /></div>
      <div className="flex w-[32px] items-center justify-center"><Ic w={14} vb={14} c="#d0cec9" sw={1.8}><path d="M7 1v12M1 7h12" /></Ic></div>
    </div>
  );
}

function Toolbar() {
  return (
    <div className={`flex h-[41px] shrink-0 items-center border-b border-[#c4c3c1] bg-[#f5f4f2] pb-[1px] text-[14px] ${UI}`}>
      <span className="ml-[3px] flex h-[33px] w-[33px] items-center justify-center rounded-full border border-[#aaa9a7] bg-white"><Ic sw={1.9}><path d="M15 8H1.500M7 2L1.500 8 7 14" /></Ic></span>
      <Ic className="ml-[9px]" c="#bdbcba"><path d="M1 8h13.500M9 2l5.500 6L9 14" /></Ic>
      <Ic className="ml-[16px]" sw={2}><path d="M13 4.200A6 6 0 1 0 14 9.500M14.500 1.500v5h-5" /></Ic>
      <Ic className="ml-[16px]" sw={2}><path d="M1 8.500L8 1.500l7 7M3.500 8v7h9V8M7.200 15v-4h1.800v4" /></Ic>
      <div className="ml-[125px] flex h-[30px] w-[990px] items-center rounded-[3px] border border-[#c3c2c0] bg-white pl-[6px] shadow-sm">
        <Ic c="#858483" sw={1.6}><path d="M8 1.500c2 1 4 1 6 1 0 6-1 10-6 12-5-2-6-6-6-12 2 0 4 0 6-1z" /><path d="M8 5v7c-2-1.500-3-3-3-6.500z" fill="#858483" stroke="none" /></Ic>
        <i className="ml-[5px] h-[22px] w-px bg-[#d0d0d0]" />
        <Ic className="ml-[7px]" c="#858483" sw={1.2}><circle cx="8" cy="8" r="6.700" /><path d="M8 7.500v4M8 4.700v.2" strokeWidth="1.800" /></Ic>
        <span className="ml-[8px] tracking-[0.08px] text-[#333]">localhost<span className="text-[#999]">:8888/#</span></span>
        <div className="mr-[6px] ml-auto flex items-center gap-[12px]">
          <svg width="16" height="16" viewBox="0 0 16 16" fill="#8a8a8a"><circle cx="2" cy="8" r="2" /><circle cx="8" cy="8" r="2" /><circle cx="14" cy="8" r="2" /></svg>
          <Ic c="#858483" sw={1.8}><path d="M1.200 2h13.600v5.500c0 9-13.600 9-13.600 0zM5 6.500l3 3 3-3" /></Ic>
          <Ic c="#858483" sw={1.6}><path d="M8 1.200l2.100 4.600 4.900.5-3.700 3.400 1.100 5L8 12.200 3.600 14.700l1.100-5L1 6.300l4.900-.5z" /></Ic>
        </div>
      </div>
      <div className="ml-[10px] flex h-[30px] w-[284px] items-center rounded-[3px] border border-[#c3c2c0] bg-white px-[7px] shadow-sm">
        <Ic w={18} c="#aaa"><circle cx="6.500" cy="6.500" r="4.700" /><path d="M10.200 10.200l4.600 4.600" /></Ic>
        <span className="ml-[10px] text-[#222]">ape escape 3</span>
        <Ic className="ml-auto" c="#777" sw={1.6}><path d="M1 8h14M9.500 2.500L15 8l-5.500 5.500" /></Ic>
      </div>
      <Ic className="ml-[125px]" c="#0a84ff" sw={2}><path d="M8 .8v10M3 6.500l5 5 5-5M2.500 15h11" /></Ic>
      <Ic className="ml-[16px]" sw={1.8}><path d="M1.500 2v12M5 2v12M8.500 2v12M11.500 2.500l3.500 11.500" strokeLinecap="butt" /></Ic>
      <Ic className="ml-[16px]" sw={1.7}><rect x=".9" y="2" width="14.200" height="12" rx="1.500" /><path d="M7.500 2v12M3 5h2M3 7.500h2M3 10h2" strokeWidth="1.200" /></Ic>
      <span className="relative ml-[16px] h-4 w-4"><Ic sw={1.4}><circle cx="8" cy="8" r="7" /><circle cx="8" cy="6" r="2.400" fill="#5f5e5c" /><path d="M3.800 11.200q4.200-3 8.400 0-4.200 4-8.400 0z" fill="#5f5e5c" /></Ic><i className="absolute -top-[3px] -right-[3px] h-[7px] w-[7px] rounded-full bg-[#00b0f4]" /></span>
      <span className="ml-[15px] flex h-[17px] w-[17px] items-center justify-center bg-[#c70d2c] text-[7px] font-bold text-white [clip-path:polygon(30%_0,70%_0,100%_30%,100%_70%,70%_100%,30%_100%,0_70%,0_30%)]">ABP</span>
      <i className="ml-[11px] h-[34px] w-px bg-[#d8d7d5]" />
      <Ic className="ml-[13px]" sw={1.8}><path d="M2.500 3h11M2.500 8h11M2.500 13h11" /></Ic>
    </div>
  );
}

const Eraser = () => (
  <svg width="17" height="16" viewBox="0 0 17 16"><path d="M6.200 1.500L2 5.700l5 5.300 4.300-4.200z" fill="#fff" stroke="#333" strokeWidth="1.200" strokeLinejoin="round" /><path d="M6 9.500L10.600 5l4.400 3.500v2L12.500 12.500H8.500z" fill="#333" /><path d="M3.500 14h11" stroke="#333" strokeWidth="1.500" /></svg>
);
const Btn = ({ className, children }) => <button className={`flex h-[34px] shrink-0 items-center justify-center border border-[#ccc] bg-white ${className}`}>{children}</button>;

function NavBar() {
  return (
    <div className={`flex h-[50px] shrink-0 items-center bg-[#f0f0f0] pb-[1px] text-[14px] font-extralight text-[#444] ${DJ}`}>
      <span className="ml-[28px] w-[63px] text-[18px] whitespace-nowrap text-[#555]">visdom</span>
      <i className="ml-[14px] h-4 w-px bg-[#ccc]" />
      <span className="ml-[9px] w-[95px] tracking-[0.12px] whitespace-nowrap">Environment</span>
      <div className="flex h-[34px] w-[607px] items-center rounded-l-[4px] border border-r-0 border-[#d5d5d5] bg-white pr-[10px] pl-[8px]">
        <span className="mb-[3px] flex h-[20px] w-[115px] items-center justify-center rounded-[3px] bg-[#f2f2f2] tracking-[0.1px] text-[#666]">AE_AtlasNet</span>
        <svg className="ml-auto" width="10" height="9" viewBox="0 0 11 10" stroke="#555" strokeWidth="1.900"><path d="M1.500 1l8 8M9.500 1l-8 8" /></svg>
      </div>
      <i className="h-[34px] w-[10px] bg-[#e4e4e4]" />
      <Btn className="w-[40px]"><Eraser /></Btn>
      <Btn className="-ml-px w-[40px] rounded-r-[4px]"><FaFolderOpen size={18} color="#333" /></Btn>
      <i className="ml-[8px] h-4 w-px bg-[#ccc]" />
      <span className="ml-[8px] w-[38px]">View</span>
      <Btn className="w-[90px] rounded-l-[4px] text-[14px] font-normal text-[#333]"><span className={UI}>current</span><i className="mt-[2px] ml-[3px] border-x-4 border-t-4 border-x-transparent border-t-[#333]" /></Btn>
      <Btn className="-ml-px w-[40px]"><svg width="13" height="13" viewBox="0 0 13 13" fill="#333"><path d="M0 0h3.500v2.600H0zM4.800 0h3.500v2.600H4.800zM9.500 0H13v2.600H9.500zM0 3.500h3.500v2.600H0zM4.800 3.500h3.500v2.600H4.800zM9.500 3.500H13v2.600H9.500zM0 7h3.500v2.600H0zM4.800 7h3.500v2.600H4.800zM9.500 7H13v2.600H9.500zM0 10.400h3.500V13H0zM4.800 10.400h3.500V13H4.800zM9.500 10.400H13V13H9.500z" /></svg></Btn>
      <Btn className="-ml-px w-[40px] rounded-r-[4px]"><FaFolderOpen size={18} color="#333" /></Btn>
      <div className="ml-auto flex h-[34px] w-[226px] items-center rounded-l-[4px] border border-[#ccc] bg-white pl-[12px] text-[#8a8a8a]">Filter text</div>
      <Btn className="-ml-px w-[40px] rounded-r-[4px]"><Eraser /></Btn>
      <span className={`mr-[15px] ml-[8px] flex h-[34px] w-[70px] items-center justify-center rounded-[4px] border border-[#4cae4c] bg-[#5cb85c] text-[14px] font-normal text-white ${UI}`}>online</span>
    </div>
  );
}

export default function App() {
  return (
    <div className="flex h-[1080px] w-[1920px] flex-col overflow-hidden">
      <TopBar />
      <div className="flex min-h-0 flex-1">
        <Launcher />
        <main className="flex min-w-0 flex-1 flex-col">
          <Tabs />
          <Toolbar />
          <NavBar />
          <div className="flex-1 bg-[#3b5998] pt-[18px] pl-[10px]">
            <div className="grid grid-cols-[repeat(4,372px)] gap-x-[10px] gap-y-[9px]">
              <Pane name="TRAIN_INPUT" Chart={TrainInput} />
              <Pane name="TRAIN_INPUT_RECONSTRUCTED" Chart={TrainRecon} />
              <Pane name="VAL_INPUT" Chart={ValInput} />
              <Pane name="VAL_INPUT_RECONSTRUCTED" Chart={ValRecon} />
              <Pane name="loss" Chart={Loss} />
              <Pane name="log" Chart={Log} />
            </div>
          </div>
        </main>
      </div>
    </div>
  );
}
